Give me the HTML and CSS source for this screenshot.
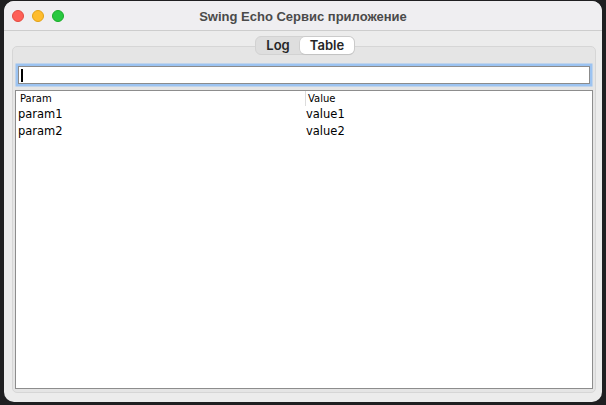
FILE: index.html
```html
<!DOCTYPE html>
<html>
<head>
<meta charset="utf-8">
<link rel="stylesheet" href="styles.css">
</head>
<body>
<div class="window">
  <div class="titlebar">
    <div class="lights">
      <span class="light red"></span>
      <span class="light yellow"></span>
      <span class="light green"></span>
    </div>
    <div class="title">Swing Echo Сервис приложение</div>
  </div>
  <div class="content">
    <div class="tabs">
      <span class="tab">Log</span>
      <span class="tab active">Table</span>
    </div>
    <div class="panel">
      <div class="field"><span class="caret"></span></div>
      <div class="table">
        <div class="thead">
          <div class="th">Param</div>
          <div class="th sep">Value</div>
        </div>
        <div class="row"><div class="td">param1</div><div class="td">value1</div></div>
        <div class="row"><div class="td">param2</div><div class="td">value2</div></div>
      </div>
    </div>
  </div>
</div>
</body>
</html>
```
FILE: styles.css
```css
html, body {
  margin: 0;
  padding: 0;
  background: #1f1f21;
  width: 606px;
  height: 405px;
  overflow: hidden;
}
.window {
  margin: 1px 0 0 4px;
  width: 598px;
  height: 401px;
  border-radius: 10px;
  background: #ececec;
  overflow: hidden;
  display: flex;
  flex-direction: column;
}
.titlebar {
  height: 29px;
  background: #efeef1;
  border-bottom: 1px solid #cdcdcd;
  position: relative;
  display: flex;
  align-items: center;
  justify-content: center;
}
.lights {
  position: absolute;
  left: 8px;
  top: 9px;
  display: flex;
  gap: 8px;
}
.light {
  width: 12px;
  height: 12px;
  border-radius: 50%;
  box-sizing: border-box;
}
.red { background: #fe5f57; border: 0.5px solid #e24b41; }
.yellow { background: #febc2e; border: 0.5px solid #e1a116; }
.green { background: #28c840; border: 0.5px solid #1aab29; }
.title {
  font-family: "Liberation Sans", Arial, sans-serif;
  font-weight: bold;
  font-size: 13px;
  color: #4a4a4a;
  margin-top: 1px;
}
.content {
  flex: 1;
  position: relative;
  padding: 15px 6px 9px 8px;
  display: flex;
  flex-direction: column;
}
.tabs {
  position: absolute;
  left: 251px;
  top: 5px;
  display: flex;
  height: 19px;
  background: #dedede;
  border-radius: 6px;
  border: 1px solid #d2d2d2;
  box-sizing: border-box;
  z-index: 1;
  padding: 0;
}
.tab {
  font-family: "Inter", "Liberation Sans", sans-serif;
  font-size: 13px;
  font-weight: 600;
  color: #262626;
  display: flex;
  align-items: center;
  justify-content: center;
  line-height: 17px;
}
.tab:first-child { width: 44px; }
.tab.active {
  width: 54px;
  background: #ffffff;
  border-radius: 5px;
  box-shadow: 0 0 0 0.5px #c4c4c4, 0 1px 1px rgba(0,0,0,0.08);
}
.panel {
  flex: 1;
  background: #e5e5e5;
  border: 1px solid #d6d6d6;
  border-radius: 5px;
  padding: 19px 2px 3px 2px;
  display: flex;
  flex-direction: column;
}
.field {
  height: 16px;
  margin: 0 3px 0 3px;
  background: #fff;
  border: 1px solid #8b8b8b;
  box-shadow: 0 0 0 2.5px #9cc3f1;
  position: relative;
}
.caret {
  position: absolute;
  left: 2px;
  top: 2px;
  width: 1.5px;
  height: 13px;
  background: #000;
}
.table {
  margin-top: 6px;
  flex: 1;
  background: #fff;
  border: 1px solid #8d8d8d;
  font-family: "DejaVu Sans", sans-serif;
  color: #000;
}
.thead {
  display: flex;
  height: 15px;
  font-size: 10px;
  line-height: 15px;
}
.th { width: 285px; padding-left: 4px; }
.th.sep { border-left: 1px solid #dcdcdc; padding-left: 2px; width: 282px; }
.row {
  display: flex;
  font-size: 11.5px;
  height: 17px;
  line-height: 17px;
}
.td { width: 287px; padding-left: 2px; }
```
